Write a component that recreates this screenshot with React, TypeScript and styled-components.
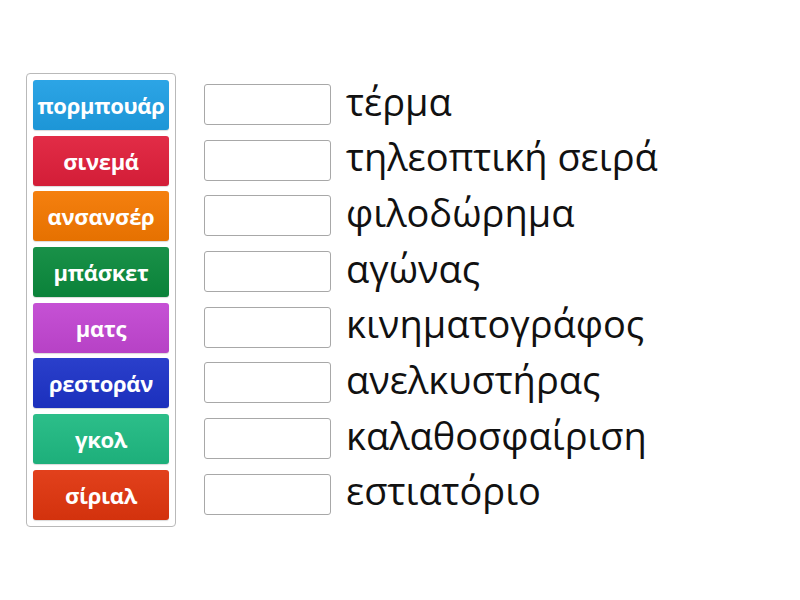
import styled, { createGlobalStyle } from 'styled-components';

const GlobalStyle = createGlobalStyle`
  body {
    margin: 0;
    background: #ffffff;
    font-family: "Open Sans", "Noto Sans", sans-serif;
  }
`;

const cards = [
  { label: 'πορμπουάρ', color: '#1f9fe4' },
  { label: 'σινεμά', color: '#e01f3b' },
  { label: 'ανσανσέρ', color: '#f47800' },
  { label: 'μπάσκετ', color: '#0b8a3d' },
  { label: 'ματς', color: '#c246d2' },
  { label: 'ρεστοράν', color: '#1d33c8' },
  { label: 'γκολ', color: '#1fba82' },
  { label: 'σίριαλ', color: '#e0350e' },
];

const words = [
  'τέρμα',
  'τηλεοπτική σειρά',
  'φιλοδώρημα',
  'αγώνας',
  'κινηματογράφος',
  'ανελκυστήρας',
  'καλαθοσφαίριση',
  'εστιατόριο',
];

function App() {
  return (
    <>
      <GlobalStyle />
      <Page>
        <CardPanel>
          {cards.map((c) => (
            <Card key={c.label} $color={c.color}>{c.label}</Card>
          ))}
        </CardPanel>
        <TargetList>
          {words.map((w) => (
            <TargetRow key={w}>
              <DropBox />
              <Word>{w}</Word>
            </TargetRow>
          ))}
        </TargetList>
      </Page>
    </>
  );
}

const Page = styled.div`
  display: flex;
  align-items: flex-start;
  padding: 73px 0 0 26px;
  gap: 28px;
`;

const CardPanel = styled.div`
  display: flex;
  flex-direction: column;
  gap: 5.7px;
  width: 136px;
  padding: 6px;
  border: 1px solid #b9b9b9;
  border-radius: 4px;
`;

const Card = styled.div<{ $color: string }>`
  height: 50px;
  display: flex;
  align-items: center;
  justify-content: center;
  border-radius: 3px;
  background-color: ${(p) => p.$color};
  background-image: linear-gradient(to bottom, rgba(255, 255, 255, 0.06), rgba(0, 0, 0, 0.06));
  box-shadow: 0 1px 1px rgba(0, 0, 0, 0.15);
  color: #ffffff;
  font-size: 22px;
  font-weight: 700;
  white-space: nowrap;
  letter-spacing: -0.3px;
`;

const TargetList = styled.div`
  display: flex;
  flex-direction: column;
  gap: 14.7px;
  padding-top: 11px;
`;

const TargetRow = styled.div`
  display: flex;
  align-items: center;
  height: 41px;
  gap: 15px;
`;

const DropBox = styled.div`
  flex: none;
  width: 125px;
  height: 39px;
  border: 1px solid #a8a8a8;
  border-radius: 3px;
  background: #ffffff;
`;

const Word = styled.span`
  font-size: 38px;
  line-height: 41px;
  padding-bottom: 7px;
  color: #111111;
  white-space: nowrap;
`;

export default App;
